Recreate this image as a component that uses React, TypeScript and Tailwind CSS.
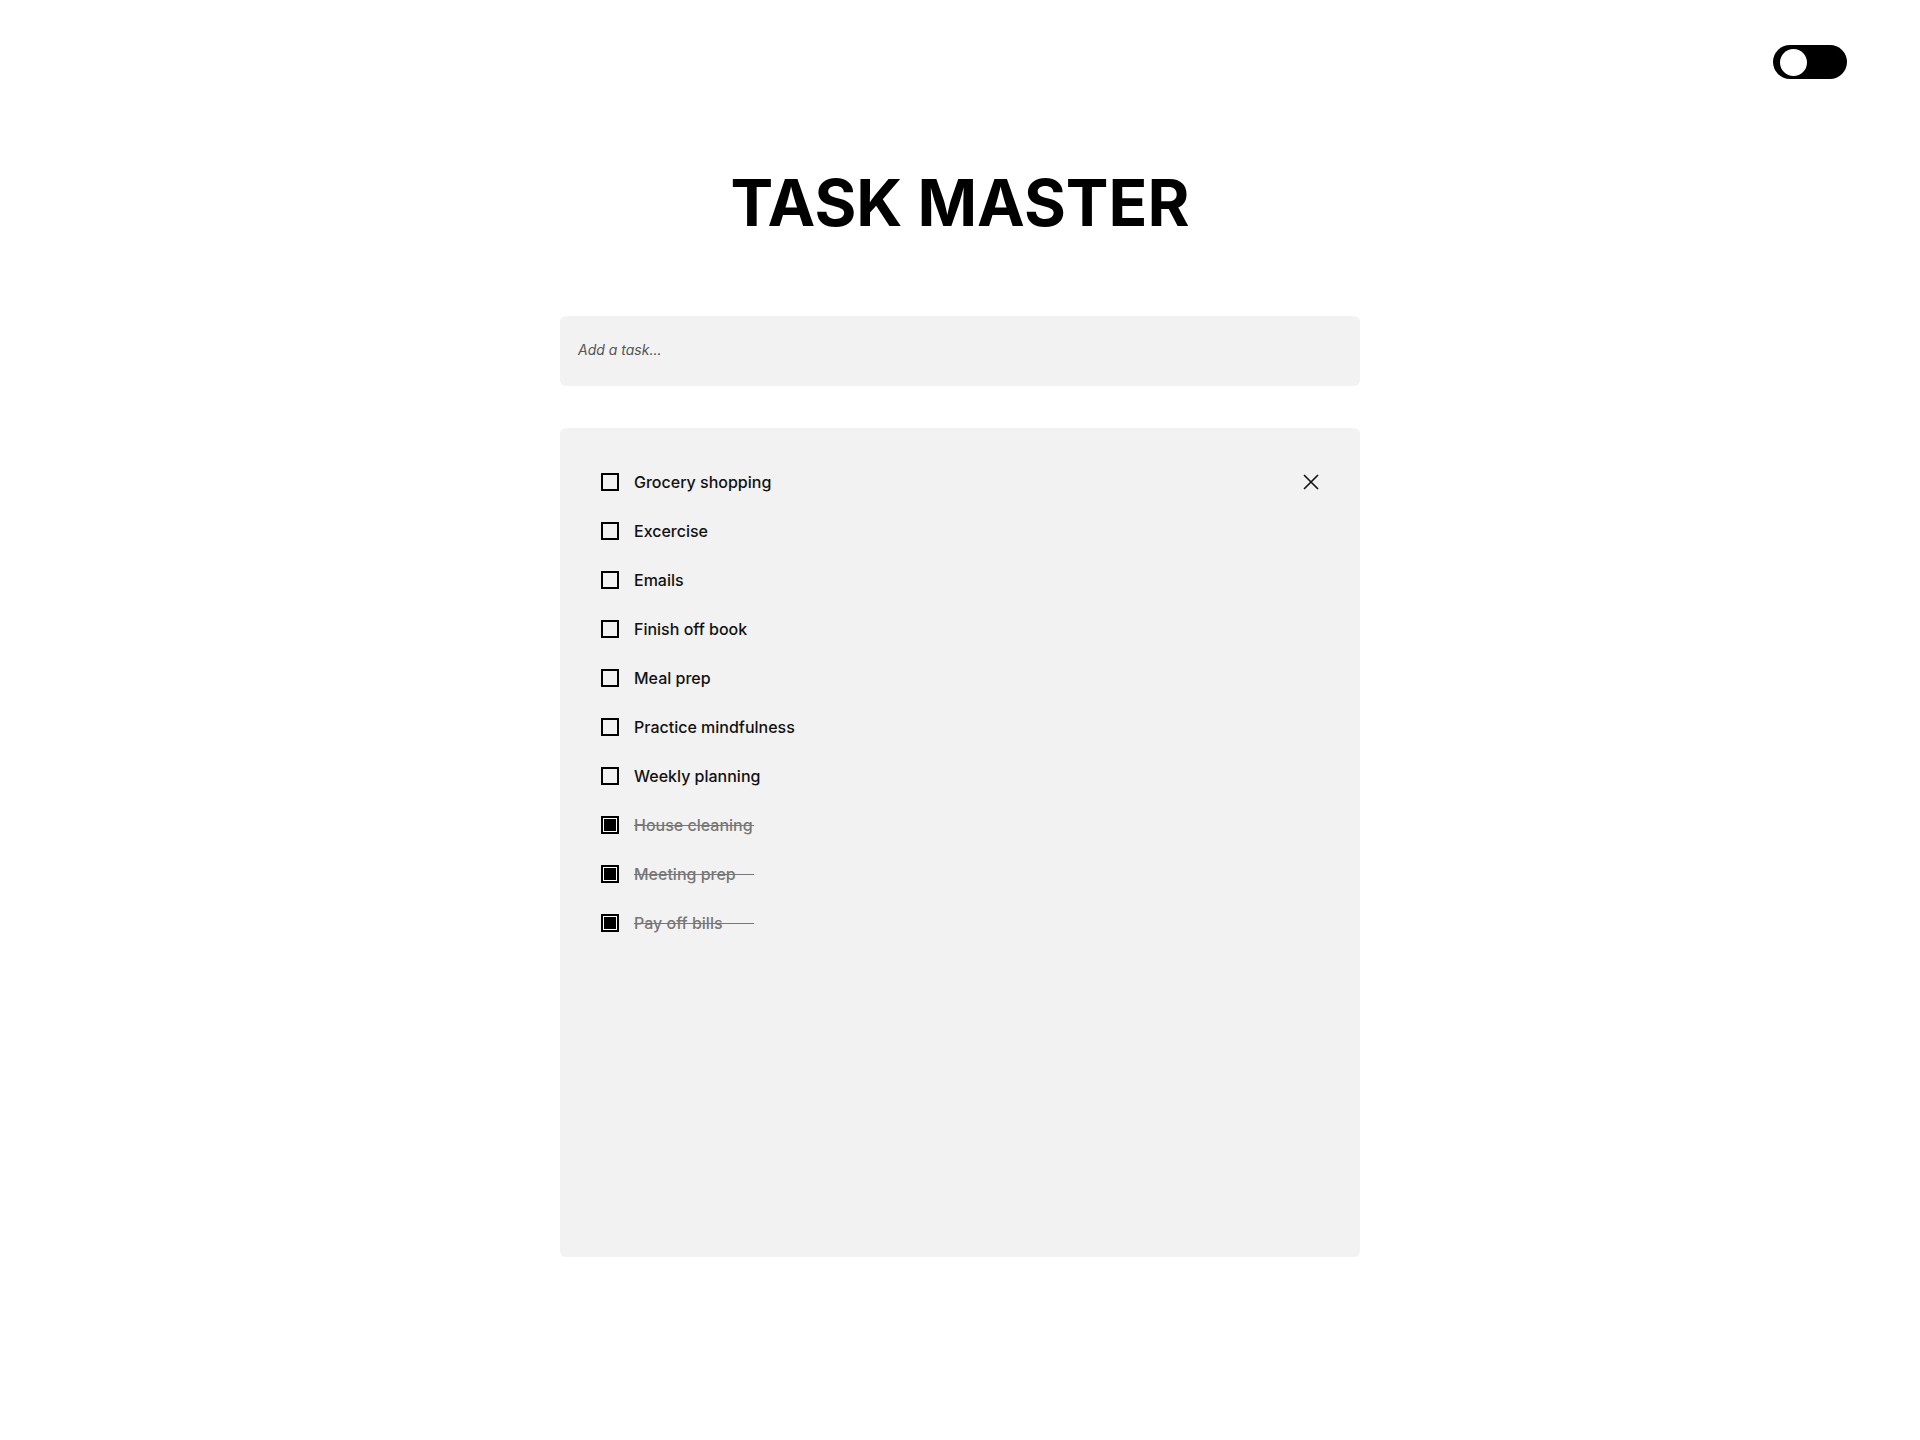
import React from "react";

const tasks: { label: string; done: boolean }[] = [
  { label: "Grocery shopping", done: false },
  { label: "Excercise", done: false },
  { label: "Emails", done: false },
  { label: "Finish off book", done: false },
  { label: "Meal prep", done: false },
  { label: "Practice mindfulness", done: false },
  { label: "Weekly planning", done: false },
  { label: "House cleaning", done: true },
  { label: "Meeting prep", done: true },
  { label: "Pay off bills", done: true },
];

export default function App() {
  return (
    <div className="min-h-[1440px] w-full bg-white font-['Inter',sans-serif] text-[#111]">
      <div className="flex justify-end pt-[45px] pr-[73px]">
        <div className="flex h-[34px] w-[74px] items-center rounded-full bg-black pl-[7px]">
          <div className="h-[27px] w-[27px] rounded-full bg-white" />
        </div>
      </div>
      <h1 className="mt-[84px] text-center text-[64px] font-bold leading-[80px] text-black">
        TASK MASTER
      </h1>
      <div className="mx-auto mt-[73px] w-[800px]">
        <div className="flex h-[70px] items-center rounded-[6px] bg-[#f2f2f2] px-[18px] pb-[3px]">
          <span className="text-[14px] italic text-[#555]">Add a task...</span>
        </div>
        <div className="mt-[42px] h-[829px] rounded-[6px] bg-[#f2f2f2] px-[41px] pt-[29px]">
          {tasks.map((t, i) => (
            <div key={i} className="flex h-[49px] items-center justify-between">
              <div className="flex items-center gap-[15px]">
                {t.done ? (
                  <div className="h-[18px] w-[18px] border-2 border-black bg-white p-[1px]">
                    <div className="h-full w-full bg-black" />
                  </div>
                ) : (
                  <div className="h-[18px] w-[18px] border-2 border-black" />
                )}
                {t.done ? (
                  <span className="relative inline-block w-[120px] text-[16px] font-medium text-[#777]">
                    {t.label}
                    <span className="absolute left-0 right-0 top-[52%] h-[1.5px] bg-[#777]" />
                  </span>
                ) : (
                  <span className="text-[16px] font-medium text-[#111]">{t.label}</span>
                )}
              </div>
              {i === 0 && (
                <svg width="16" height="16" viewBox="0 0 16 16">
                  <path d="M1 1L15 15M15 1L1 15" stroke="#111" strokeWidth="1.6" />
                </svg>
              )}
            </div>
          ))}
        </div>
      </div>
    </div>
  );
}
